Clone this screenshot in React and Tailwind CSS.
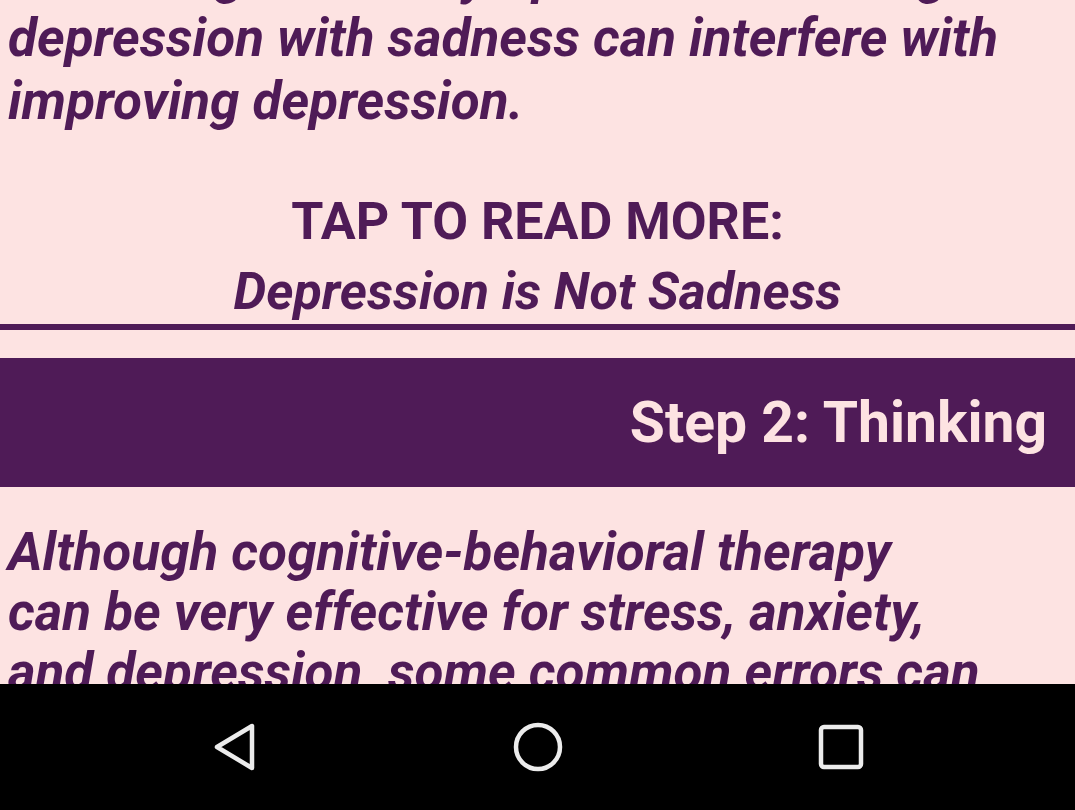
import React from "react";

const PURPLE = "bg-[#4f1b57]";

function BackIcon() {
  return (
    <svg width="52" height="52" viewBox="0 0 52 52" fill="none">
      <path
        d="M43 5 L43 47 L8 26 Z"
        stroke="#ececec"
        strokeWidth="4.5"
        strokeLinejoin="round"
      />
    </svg>
  );
}

function HomeIcon() {
  return (
    <svg width="52" height="52" viewBox="0 0 52 52" fill="none">
      <circle cx="26" cy="26" r="22" stroke="#ececec" strokeWidth="4.5" />
    </svg>
  );
}

function RecentsIcon() {
  return (
    <svg width="48" height="48" viewBox="0 0 48 48" fill="none">
      <rect
        x="4"
        y="4"
        width="40"
        height="40"
        rx="3"
        stroke="#ececec"
        strokeWidth="4.5"
      />
    </svg>
  );
}

export default function App() {
  return (
    <div
      className="h-[810px] w-full flex flex-col overflow-hidden bg-[#fde3e2] text-[#4f1b57]"
      style={{ fontFamily: "Roboto, 'Noto Sans', sans-serif" }}
    >
      {/* scrolling article */}
      <div className="flex-1 overflow-hidden">
        <div className="px-2 -mt-[56px] text-[53px] leading-[63px] font-bold italic whitespace-nowrap">
          <div>Confusing clinical symptoms and feelings of</div>
          <div>depression with sadness can interfere with</div>
          <div>improving depression.</div>
        </div>

        <div className="mt-[54px] text-center font-bold text-[52px] leading-[70px]">
          <div>TAP TO READ MORE:</div>
          <div className="italic">Depression is Not Sadness</div>
        </div>

        <div className={`h-[6px] -mt-[3px] ${PURPLE}`} />

        <div className="h-[28px]" />

        <div
          className={`h-[129px] flex items-center justify-end pr-7 ${PURPLE}`}
        >
          <h2 className="text-[57px] font-bold text-[#fde3e2]">
            Step 2: Thinking
          </h2>
        </div>

        <div className="px-2 pt-[35px] text-[53px] leading-[60px] font-bold italic whitespace-nowrap">
          <div>Although cognitive-behavioral therapy</div>
          <div>can be very effective for stress, anxiety,</div>
          <div>and depression, some common errors can</div>
        </div>
      </div>

      {/* android nav bar */}
      <div className="h-[126px] shrink-0 bg-black flex items-center justify-center">
        <div className="w-[303px] flex justify-center">
          <BackIcon />
        </div>
        <div className="w-[303px] flex justify-center">
          <HomeIcon />
        </div>
        <div className="w-[303px] flex justify-center">
          <RecentsIcon />
        </div>
      </div>
    </div>
  );
}
